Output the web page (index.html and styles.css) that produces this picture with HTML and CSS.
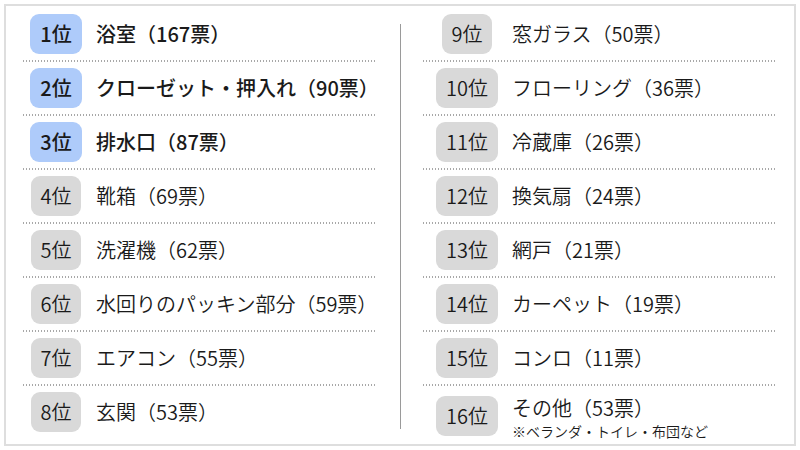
FILE: index.html
```html
<!DOCTYPE html>
<html lang="ja">
<head>
<meta charset="utf-8">
<link rel="stylesheet" href="styles.css">
</head>
<body>
<div class="board">
  <ul class="col col-left">
    <li class="row top"><span class="cell"><span class="badge">1位</span></span><span class="label">浴室（167票）</span></li>
    <li class="sep"></li>
    <li class="row top"><span class="cell"><span class="badge">2位</span></span><span class="label">クローゼット・押入れ（90票）</span></li>
    <li class="sep"></li>
    <li class="row top"><span class="cell"><span class="badge">3位</span></span><span class="label">排水口（87票）</span></li>
    <li class="sep"></li>
    <li class="row"><span class="cell"><span class="badge">4位</span></span><span class="label">靴箱（69票）</span></li>
    <li class="sep"></li>
    <li class="row"><span class="cell"><span class="badge">5位</span></span><span class="label">洗濯機（62票）</span></li>
    <li class="sep"></li>
    <li class="row"><span class="cell"><span class="badge">6位</span></span><span class="label">水回りのパッキン部分（59票）</span></li>
    <li class="sep"></li>
    <li class="row"><span class="cell"><span class="badge">7位</span></span><span class="label">エアコン（55票）</span></li>
    <li class="sep"></li>
    <li class="row"><span class="cell"><span class="badge">8位</span></span><span class="label">玄関（53票）</span></li>
  </ul>
  <div class="divider"></div>
  <ul class="col col-right">
    <li class="row"><span class="cell"><span class="badge">9位</span></span><span class="label">窓ガラス（50票）</span></li>
    <li class="sep"></li>
    <li class="row"><span class="cell"><span class="badge">10位</span></span><span class="label">フローリング（36票）</span></li>
    <li class="sep"></li>
    <li class="row"><span class="cell"><span class="badge">11位</span></span><span class="label">冷蔵庫（26票）</span></li>
    <li class="sep"></li>
    <li class="row"><span class="cell"><span class="badge">12位</span></span><span class="label">換気扇（24票）</span></li>
    <li class="sep"></li>
    <li class="row"><span class="cell"><span class="badge">13位</span></span><span class="label">網戸（21票）</span></li>
    <li class="sep"></li>
    <li class="row"><span class="cell"><span class="badge">14位</span></span><span class="label">カーペット（19票）</span></li>
    <li class="sep"></li>
    <li class="row"><span class="cell"><span class="badge">15位</span></span><span class="label">コンロ（11票）</span></li>
    <li class="sep"></li>
    <li class="row"><span class="cell"><span class="badge">16位</span></span><span class="label label-stack"><span class="main">その他（53票）</span><span class="note">※ベランダ・トイレ・布団など</span></span></li>
  </ul>
</div>
</body>
</html>
```
FILE: styles.css
```css
* { box-sizing: border-box; }
html, body { margin: 0; padding: 0; background: #ffffff; }
body {
  font-family: "Noto Sans CJK JP", "Noto Sans", sans-serif;
  font-weight: 350;
  color: #1a1a1a;
}
.board {
  margin: 4px;
  width: 792px;
  height: 442px;
  border: 2px solid #dedede;
  display: flex;
  align-items: flex-start;
  padding: 2px 19px 0 17px;
  background: #fff;
}
.col {
  list-style: none;
  margin: 0;
  padding: 0;
  width: 352px;
  display: flex;
  flex-direction: column;
}
.divider {
  width: 1px;
  height: 405px;
  background: #9a9a9a;
  margin: 16px 22px 0 25px;
}
.row {
  display: flex;
  align-items: center;
  padding: 6px 0;
  min-height: 52px;
}
.cell {
  display: flex;
  justify-content: center;
  flex: 0 0 auto;
}
.col-left .cell { width: 66px; }
.col-right .cell { width: 88px; }
.badge {
  display: inline-flex;
  align-items: center;
  justify-content: center;
  height: 40px;
  min-width: 50px;
  padding: 0 10px;
  border-radius: 9px;
  background: #d9d9d9;
  font-size: 20px;
  line-height: 1;
  color: #1a1a1a;
}
.top .badge {
  background: #aecbfa;
  font-weight: 500;
}
.label {
  font-size: 20px;
  line-height: 26px;
}
.top .label {
  font-weight: 500;
}
.col-left .label { margin-left: 7px; }
.col-right .label { margin-left: 1px; }
.label-stack {
  display: flex;
  flex-direction: column;
  padding-top: 2px;
}
.label-stack .main { line-height: 28px; }
.label-stack .note {
  font-size: 14px;
  line-height: 18px;
}
.sep {
  height: 2px;
  background-image: linear-gradient(to right, #a8a8a8 1.5px, transparent 1.5px);
  background-size: 3px 2px;
  background-repeat: repeat-x;
}
```
